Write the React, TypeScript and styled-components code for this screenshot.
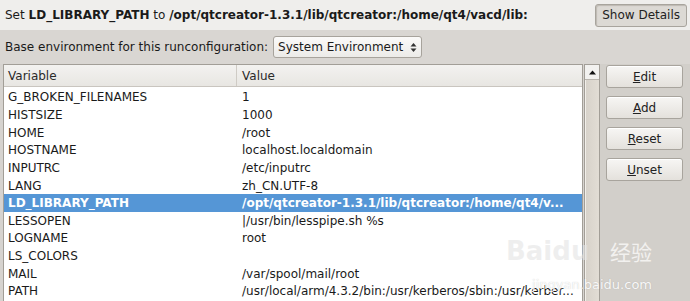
import React from "react";
import styled, { createGlobalStyle } from "styled-components";

const Global = createGlobalStyle`
  html, body { margin: 0; padding: 0; }
  body { width: 690px; height: 301px; overflow: hidden; background: #d6d3cf; font-family: "DejaVu Sans", sans-serif; font-size: 12px; color: #1a1a1a; }
`;

const Page = styled.div`
  position: relative;
  width: 690px;
  height: 301px;
  display: flex;
  flex-direction: column;
  overflow: hidden;
`;

const TopBar = styled.div`
  height: 30px;
  flex: none;
  background: #efeeec;
  display: flex;
  align-items: center;
  justify-content: space-between;
  padding: 0 3px 0 5px;
`;

const Summary = styled.div`
  white-space: nowrap;
  b { font-weight: bold; }
`;

const Button = styled.button<{ $w?: number }>`
  font-family: "DejaVu Sans", sans-serif;
  font-size: 12px;
  color: #222;
  height: 23px;
  width: ${(p) => (p.$w ? `${p.$w}px` : "auto")};
  padding: 0 6px;
  border: 1px solid #a8a49d;
  border-radius: 3px;
  background: linear-gradient(#f7f6f4, #e4e1dc);
  box-shadow: inset 0 1px 0 #fff;
  u { text-decoration: underline; }
`;

const ShowDetails = styled(Button)`
  background: #dcd9d4;
  box-shadow: inset 1px 1px 1px #bdb9b2;
`;

const EnvRow = styled.div`
  height: 34px;
  flex: none;
  display: flex;
  align-items: center;
  gap: 5px;
  padding: 0 5px;
  background: #d9d6d2;
`;

const Select = styled.div`
  width: 149px;
  height: 22px;
  box-sizing: border-box;
  border: 1px solid #a7a39c;
  border-radius: 3px;
  background: linear-gradient(#fbfaf9, #ecebe8);
  display: flex;
  align-items: center;
  justify-content: space-between;
  padding: 0 4px 0 4px;
`;

const Main = styled.div`
  flex: 1;
  display: flex;
  padding: 0 0 0 3px;
  min-height: 0;
`;

const TableBox = styled.div`
  width: 580px;
  border: 1px solid #a29e97;
  border-bottom: none;
  background: #fff;
  display: flex;
  flex-direction: column;
  box-sizing: border-box;
`;

const Header = styled.div`
  height: 21px;
  flex: none;
  display: grid;
  grid-template-columns: 233px 1fr;
  background: linear-gradient(#f3f2f0, #e8e6e2);
  border-bottom: 1px solid #c9c5bf;
`;

const HeadCell = styled.div<{ $first?: boolean }>`
  display: flex;
  align-items: center;
  padding-left: ${(p) => (p.$first ? "4px" : "5px")};
  border-right: ${(p) => (p.$first ? "1px solid #cfcbc5" : "none")};
  color: #2a2a2a;
`;

const Row = styled.div<{ $sel?: boolean }>`
  height: 17.65px;
  display: grid;
  grid-template-columns: 233px 1fr;
  align-items: center;
  background: ${(p) => (p.$sel ? "#5596d6" : "transparent")};
  color: ${(p) => (p.$sel ? "#fff" : "#1a1a1a")};
  font-weight: ${(p) => (p.$sel ? "bold" : "normal")};
  white-space: nowrap;
`;

const Cell = styled.div`
  padding-left: 4px;
  overflow: hidden;
`;

const ValueCell = styled(Cell)`
  padding-left: 5px;
`;

const Body = styled.div`
  padding-top: 1.5px;
`;

const ScrollBar = styled.div`
  width: 16px;
  margin-left: 1px;
  border: 1px solid #a29e97;
  border-bottom: none;
  background: #dbd7d0;
  display: flex;
  flex-direction: column;
  box-sizing: border-box;
`;

const ScrollArrow = styled.div`
  height: 14px;
  background: #f2f1ef;
  border-bottom: 1px solid #b9b5ae;
  display: flex;
  align-items: center;
  justify-content: center;
`;

const Track = styled.div`
  flex: 1;
  background: linear-gradient(90deg, #d7d2ca, #e2ddd5);
  border-left: 1px solid #f2efea;
`;

const SidePanel = styled.div`
  flex: 1;
  display: flex;
  flex-direction: column;
  gap: 8px;
  padding: 1px 7px 0 6px;
  background: #d2cfca;
`;

const Watermark = styled.div`
  position: absolute;
  left: 506px;
  top: 236px;
  width: 146px;
  display: flex;
  flex-direction: column;
  align-items: stretch;
  gap: 11px;
  pointer-events: none;
`;

const WatermarkLine = styled.div`
  display: flex;
  align-items: center;
  justify-content: space-between;
`;

const WatermarkLogo = styled.span`
  font-family: "DejaVu Sans", sans-serif;
  font-size: 26px;
  font-weight: bold;
  line-height: 30px;
  color: rgba(228, 228, 228, 0.6);
`;

const WatermarkTitle = styled.span`
  font-family: "Noto Sans CJK SC", sans-serif;
  font-size: 21px;
  line-height: 30px;
  color: #f2f1ef;
`;

const WatermarkUrl = styled.span`
  align-self: flex-end;
  font-family: "DejaVu Sans", sans-serif;
  font-size: 13px;
  line-height: 16px;
  color: rgba(255, 255, 255, 0.92);
  text-shadow: 0 0 1px rgba(130, 130, 130, 0.45);
  white-space: nowrap;
`;

const rows: [string, string][] = [
  ["G_BROKEN_FILENAMES", "1"],
  ["HISTSIZE", "1000"],
  ["HOME", "/root"],
  ["HOSTNAME", "localhost.localdomain"],
  ["INPUTRC", "/etc/inputrc"],
  ["LANG", "zh_CN.UTF-8"],
  ["LD_LIBRARY_PATH", "/opt/qtcreator-1.3.1/lib/qtcreator:/home/qt4/v..."],
  ["LESSOPEN", "|/usr/bin/lesspipe.sh %s"],
  ["LOGNAME", "root"],
  ["LS_COLORS", ""],
  ["MAIL", "/var/spool/mail/root"],
  ["PATH", "/usr/local/arm/4.3.2/bin:/usr/kerberos/sbin:/usr/kerber..."],
];

export default function App() {
  return (
    <Page>
      <Global />
      <TopBar>
        <Summary>
          Set <b>LD_LIBRARY_PATH</b> to <b>/opt/qtcreator-1.3.1/lib/qtcreator:/home/qt4/vacd/lib:</b>
        </Summary>
        <ShowDetails>Show Details</ShowDetails>
      </TopBar>
      <EnvRow>
        <span>Base environment for this runconfiguration:</span>
        <Select>
          <span>System Environment</span>
          <svg width="7" height="11" viewBox="0 0 7 11">
            <path d="M0.5 4.5 L3.5 1 L6.5 4.5 Z" fill="#333" />
            <path d="M0.5 6.5 L3.5 10 L6.5 6.5 Z" fill="#333" />
          </svg>
        </Select>
      </EnvRow>
      <Main>
        <TableBox>
          <Header>
            <HeadCell $first>Variable</HeadCell>
            <HeadCell>Value</HeadCell>
          </Header>
          <Body>
            {rows.map(([k, v]) => (
              <Row key={k} $sel={k === "LD_LIBRARY_PATH"}>
                <Cell>{k}</Cell>
                <ValueCell>{v}</ValueCell>
              </Row>
            ))}
          </Body>
        </TableBox>
        <ScrollBar>
          <ScrollArrow>
            <svg width="7" height="5" viewBox="0 0 7 5">
              <path d="M0 4.5 L3.5 0.5 L7 4.5 Z" fill="#111" />
            </svg>
          </ScrollArrow>
          <Track />
        </ScrollBar>
        <SidePanel>
          <Button $w={77}><u>E</u>dit</Button>
          <Button $w={77}><u>A</u>dd</Button>
          <Button $w={77}><u>R</u>eset</Button>
          <Button $w={77}><u>U</u>nset</Button>
        </SidePanel>
      </Main>
      <Watermark>
        <WatermarkLine>
          <WatermarkLogo>Baidu</WatermarkLogo>
          <WatermarkTitle>经验</WatermarkTitle>
        </WatermarkLine>
        <WatermarkUrl>jingyan.baidu.com</WatermarkUrl>
      </Watermark>
    </Page>
  );
}
